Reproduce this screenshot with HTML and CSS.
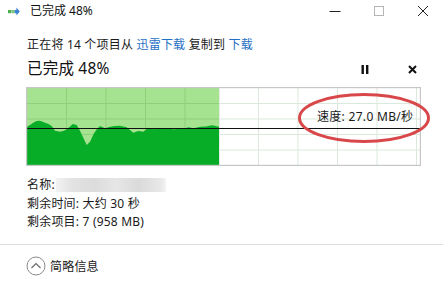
FILE: index.html
```html
<!DOCTYPE html>
<html lang="zh-CN">
<head>
<meta charset="utf-8">
<link rel="stylesheet" href="styles.css">
</head>
<body>
<div class="window">
  <div class="titlebar">
    <svg class="app-icon" width="12" height="10" viewBox="0 0 12 10">
      <rect x="0" y="3" width="3.2" height="3.2" fill="#4fae52"/>
      <rect x="3.4" y="3" width="3.2" height="3.2" fill="#7cc878"/>
      <path d="M6.6 3 H8.4 V0.6 L11.8 4.6 L8.4 8.6 V6.2 H6.6 Z" fill="#3a82d2"/>
    </svg>
    <span class="title">已完成 48%</span>
    <div class="controls">
      <span class="ctl"><svg width="12" height="12" viewBox="0 0 12 12"><path d="M0.5 6.5 H11.5" stroke="#222" stroke-width="1"/></svg></span>
      <span class="ctl"><svg width="12" height="12" viewBox="0 0 12 12"><rect x="1.5" y="1.5" width="9" height="9" fill="none" stroke="#b5b5b5" stroke-width="1"/></svg></span>
      <span class="ctl"><svg width="12" height="12" viewBox="0 0 12 12"><path d="M1 1 L11 11 M11 1 L1 11" stroke="#222" stroke-width="1"/></svg></span>
    </div>
  </div>

  <div class="content">
    <div class="line1">正在将 14 个项目从 <span class="link">迅雷下载</span> 复制到 <span class="link">下载</span></div>
    <div class="header">
      <span class="big">已完成 48%</span>
      <div class="actions">
        <svg class="pause" width="8" height="9" viewBox="0 0 8 9"><rect x="0.5" y="0" width="2.4" height="9" fill="#111"/><rect x="5" y="0" width="2.4" height="9" fill="#111"/></svg>
        <svg class="stop" width="9" height="9" viewBox="0 0 9 9"><path d="M1 1 L8 8 M8 1 L1 8" stroke="#111" stroke-width="2"/></svg>
      </div>
    </div>

    <div class="graph">
      <svg width="395" height="79" viewBox="0 0 395 79">
        <rect x="0" y="0" width="395" height="79" fill="#ffffff"/>
        <rect x="1" y="1" width="192" height="77" fill="#a6e391"/>
        <g stroke="#dbe8db" stroke-width="1">
          <path d="M232.5 1 V78 M272 1 V78 M311.5 1 V78 M351 1 V78 M390.5 1 V78"/>
          <path d="M193 16.5 H394 M193 32 H394 M193 47.5 H394 M193 63 H394"/>
          <path d="M193.5 1 V78" stroke="#e4ece4"/>
        </g>
        <g stroke="#8fd07a" stroke-width="1">
          <path d="M40.5 1 V78 M80 1 V78 M119.5 1 V78 M159 1 V78"/>
          <path d="M1 16.5 H193 M1 32 H193 M1 47.5 H193 M1 63 H193"/>
        </g>
        <polygon fill="#07ad27" points="1,39.7 4,38 7.3,35.7 10,34.2 13.3,33.7 16,34.5 19,35.7 22.5,37 25.7,39 29,43.7 34,44.7 38,43.8 40.7,42.3 44,39.5 46.7,37 50.7,38 54,43.7 58,52.3 60.7,58 64,54.7 68,46.3 71,42 74,39 79,41.3 84,39.7 89,39 94,38.7 100.7,40.3 104,43 107.3,45.7 112.3,44 117.3,44.7 122.3,40.7 127.3,42.3 134,41.3 140.7,41.3 147.3,42.3 152,42 157.3,42 162.3,40.3 167.3,41.3 171,40.5 174,39.7 180,39.5 185.7,38.3 190,39 193,39.7 193,78 1,78"/>
        <path d="M1 41.5 H394" stroke="#111" stroke-width="1"/>
        <rect x="0.5" y="0.5" width="394" height="78" fill="none" stroke="#c6c6c6" stroke-width="1.4"/>
      </svg>
      <span class="speed">速度: 27.0 MB/秒</span>
      <svg class="ring" width="136" height="54" viewBox="0 0 136 54">
        <ellipse cx="68" cy="27" rx="64.5" ry="23.5" fill="none" stroke="#d8484a" stroke-width="3"/>
      </svg>
    </div>

    <div class="info">
      <div class="row">名称: <span class="blur"></span></div>
      <div class="row">剩余时间: 大约 30 秒</div>
      <div class="row">剩余项目: 7 (958 MB)</div>
    </div>
  </div>

  <div class="footer">
    <svg class="chev" width="20" height="20" viewBox="0 0 20 20">
      <circle cx="10" cy="10" r="9" fill="none" stroke="#8a8a8a" stroke-width="1"/>
      <path d="M5.5 12 L10 7.5 L14.5 12" fill="none" stroke="#666" stroke-width="1.1"/>
    </svg>
    <span class="more">简略信息</span>
  </div>
</div>
</body>
</html>
```

FILE: styles.css
```css
* { box-sizing: border-box; }
html, body { margin: 0; padding: 0; background: #ffffff; }
body {
  font-family: "Noto Sans", "Noto Sans CJK SC", sans-serif;
  color: #1a1a1a;
  font-size: 12px;
}
.window {
  width: 443px;
  height: 283px;
  overflow: hidden;
  background: #ffffff;
  display: flex;
  flex-direction: column;
}
.titlebar {
  height: 22px;
  display: flex;
  align-items: center;
  padding-left: 8px;
}
.app-icon { margin-right: 10px; margin-top: 1px; }
.title { font-size: 12px; line-height: 22px; color: #111; }
.controls {
  margin-left: auto;
  display: flex;
  align-items: center;
  padding-right: 14px;
  gap: 32px;
}
.ctl { display: flex; width: 12px; height: 12px; }
.content {
  padding: 0 22px 0 26px;
  display: flex;
  flex-direction: column;
}
.line1 {
  margin-top: 14px;
  line-height: 18px;
  height: 18px;
  font-size: 12px;
  color: #1a1a1a;
  padding-left: 1px;
  white-space: nowrap;
  letter-spacing: 0.2px;
}
.link { color: #1f6fc5; }
.header {
  margin-top: 4px;
  height: 20px;
  display: flex;
  align-items: center;
}
.big {
  font-size: 15.5px;
  line-height: 20px;
  color: #111;
  padding-left: 1px;
  letter-spacing: 0.2px;
}
.actions {
  margin-left: auto;
  display: flex;
  align-items: center;
  gap: 39px;
  padding-right: 4px;
  margin-top: 2px;
}
.graph {
  position: relative;
  margin-top: 9px;
  width: 395px;
  height: 79px;
}
.graph > svg:first-child { display: block; }
.speed {
  position: absolute;
  left: 291px;
  top: 21px;
  font-size: 12px;
  line-height: 18px;
  color: #1a1a1a;
  white-space: nowrap;
  letter-spacing: 0.3px;
}
.ring {
  position: absolute;
  left: 270px;
  top: 4px;
}
.info {
  margin-top: 10px;
  display: flex;
  flex-direction: column;
  padding-left: 1px;
}
.row {
  line-height: 18.5px;
  height: 18.5px;
  font-size: 12px;
  display: flex;
  align-items: center;
  white-space: pre;
  letter-spacing: 0.2px;
}
.blur {
  display: inline-block;
  width: 110px;
  height: 14px;
  margin-left: -2px;
  background: linear-gradient(90deg, #f2f2f2 0%, #e2e2e2 15%, #dcdcdc 35%, #e6e6e6 55%, #dadada 75%, #e8e8e8 95%, #f4f4f4 100%);
}
.footer {
  margin-top: 12px;
  border-top: 1.5px solid #dedede;
  height: 38px;
  display: flex;
  align-items: center;
  padding-left: 26px;
  padding-top: 6px;
}
.chev { margin-right: 4px; }
.more { font-size: 12px; color: #1a1a1a; letter-spacing: 0.2px; }
```
